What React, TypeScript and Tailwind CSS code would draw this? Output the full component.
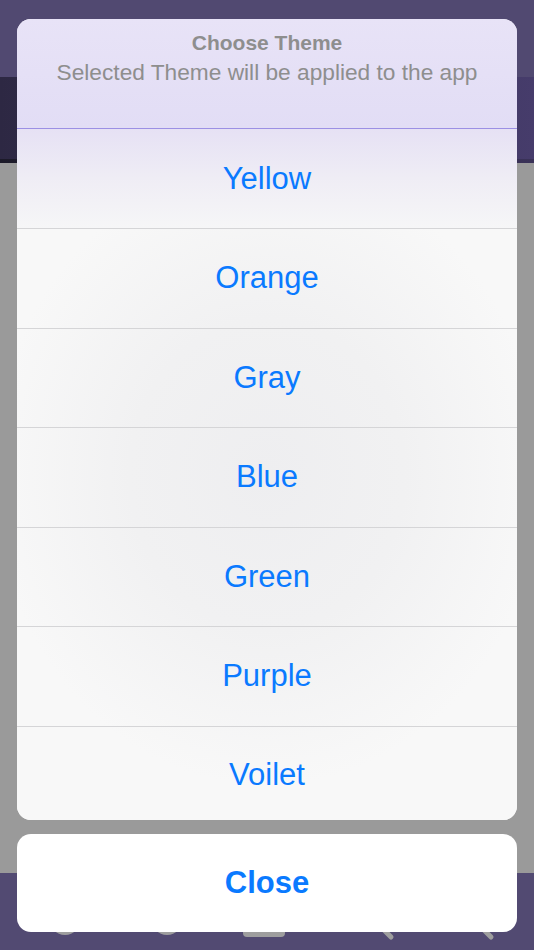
import React from "react";

const font = { fontFamily: '"Liberation Sans", Arial, sans-serif' };

function CircleIcon() {
  return (
    <svg width="48" height="48" viewBox="0 0 48 48">
      <circle cx="24" cy="24" r="16" fill="#9e9e9e" />
    </svg>
  );
}

function RectIcon() {
  return (
    <svg width="48" height="48" viewBox="0 0 48 48">
      <rect x="3" y="10" width="42" height="32" rx="4" fill="#9e9e9e" />
    </svg>
  );
}

function SearchIcon() {
  return (
    <svg width="48" height="48" viewBox="0 0 48 48">
      <circle cx="18" cy="22" r="12" fill="none" stroke="#9e9e9e" strokeWidth="4" />
      <line x1="27" y1="31" x2="38" y2="42" stroke="#9e9e9e" strokeWidth="5" strokeLinecap="round" />
    </svg>
  );
}

const themes = ["Yellow", "Orange", "Gray", "Blue", "Green", "Purple", "Voilet"];

export default function App() {
  return (
    <div className="relative w-[534px] h-[950px] overflow-hidden" style={font}>
      {/* background app */}
      <div className="flex flex-col h-full">
        <div className="h-[77px] bg-[#514971]" />
        <div className="flex flex-col h-[86px]">
          <div className="flex-1 bg-gradient-to-r from-[#2d2843] to-[#463c6b]" />
          <div className="h-[4px] bg-gradient-to-r from-[#1c1a29] to-[#3a3258]" />
        </div>
        <div className="flex-1 bg-[#9a9a9a]" />
        <div className="h-[77px] bg-[#524a72] flex items-start">
          <div className="flex items-start pt-[22px]">
            <div className="ml-[41px]"><CircleIcon /></div>
            <div className="ml-[54px]"><CircleIcon /></div>
            <div className="ml-[49px]"><RectIcon /></div>
            <div className="ml-[65px]"><SearchIcon /></div>
            <div className="ml-[52px]"><SearchIcon /></div>
          </div>
        </div>
      </div>

      {/* action sheet overlay */}
      <div className="absolute inset-0 flex flex-col px-[17px] pt-[19px]">
        <div className="rounded-[14px] overflow-hidden bg-[#f7f7f7]">
          <div className="h-[109px] bg-gradient-to-b from-[#e8e3f7] to-[#e2ddf5] flex flex-col items-center pt-[11px]">
            <div className="text-[21px] leading-[26px] font-bold text-[#8e8e8e]">Choose Theme</div>
            <div className="mt-[1px] text-[22.7px] leading-[30px] text-[#8e8e8e]">
              Selected Theme will be applied to the app
            </div>
          </div>
          <div className="h-px bg-[#9c90e4]" />
          <div className="bg-[radial-gradient(ellipse_55%_45%_at_50%_50%,#eeeef0_0%,#f1f1f2_50%,#f8f8f8_100%)]">
            {themes.map((t, i) => (
              <div
                key={t}
                className={
                  i === 0
                    ? "h-[99px] flex items-center justify-center bg-gradient-to-b from-[#e6e1f4] via-[#efedf5] to-[#f6f6f7]"
                    : i === themes.length - 1
                    ? "h-[94px] border-t border-[#d5d5d7] flex items-center justify-center pt-[3px]"
                    : "h-[99.5px] border-t border-[#d5d5d7] flex items-center justify-center"
                }
              >
                <span className="text-[31px] leading-[36px] text-[#0a7aff]">{t}</span>
              </div>
            ))}
          </div>
        </div>
        <div className="mt-[14px] h-[98px] rounded-[14px] bg-white flex items-center justify-center">
          <span className="text-[31px] leading-[36px] font-bold text-[#0a7aff]">Close</span>
        </div>
      </div>
    </div>
  );
}
